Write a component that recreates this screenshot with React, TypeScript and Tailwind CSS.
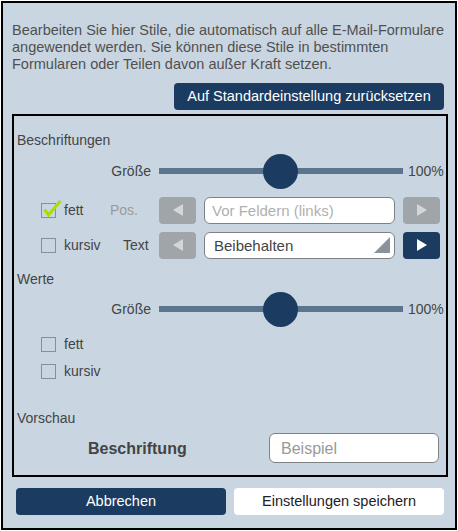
import React from "react";

const navy = "bg-[#1b3b61]";

const Slider: React.FC<{ label: string }> = ({ label }) => (
	<div className="flex items-center h-[36px]">
		<div className="w-[137px] text-right">{label}</div>
		<div className="relative ml-[8px] w-[244px] h-[6px] bg-[#5b7590]">
			<div className="absolute left-[104px] top-[-14.5px] w-[35px] h-[35px] rounded-full bg-[#1b3b61]" />
		</div>
		<div className="ml-[5px]">100%</div>
	</div>
);

const CheckBox: React.FC<{ checked?: boolean }> = ({ checked }) => (
	<div className="relative w-[15px] h-[15px] border border-[#8a8f94]">
		{checked && (
			<svg
				className="absolute left-[1px] top-[-5px]"
				width="20"
				height="18"
				viewBox="0 0 20 18"
			>
				<path
					d="M1.5 10.5 L5.5 16 L17.5 2"
					fill="none"
					stroke="#a8e000"
					strokeWidth="3"
				/>
			</svg>
		)}
	</div>
);

const ArrowButton: React.FC<{ dir: "left" | "right"; active?: boolean }> = ({
	dir,
	active,
}) => (
	<div
		className={
			active
				? "w-[37px] h-[27px] rounded-[4px] bg-[#1b3b61] flex items-center justify-center"
				: "w-[37px] h-[27px] rounded-[4px] bg-[#a0a5a9] flex items-center justify-center"
		}
	>
		<svg width="10" height="12" viewBox="0 0 10 12">
			{dir === "left" ? (
				<polygon points="10,0 10,12 0,6" fill="#d2d6d9" />
			) : (
				<polygon points="0,0 0,12 10,6" fill={active ? "#ffffff" : "#d2d6d9"} />
			)}
		</svg>
	</div>
);

export default function App() {
	return (
		<div
			className="w-[458px] h-[531px] pt-px pl-px text-[14px] leading-[17px] text-[#444]"
			style={{ fontFamily: '"Liberation Sans", Arial, sans-serif' }}
		>
			<div className="w-[456px] h-[529px] border-2 border-black bg-[#c9d6e1] flex flex-col">
				<p className="pt-[19px] pl-[9px] w-[450px] text-[#505050] text-[14.5px]">
					Bearbeiten Sie hier Stile, die automatisch auf alle E-Mail-Formulare
					angewendet werden. Sie können diese Stile in bestimmten Formularen
					oder Teilen davon außer Kraft setzen.
				</p>
				<div className="mt-[10px] flex justify-end pr-[11px]">
					<button
						type="button"
						className={`w-[270px] h-[27px] rounded-[4px] ${navy} text-white text-[14.5px]`}
					>
						Auf Standardeinstellung zurücksetzen
					</button>
				</div>
				<div className="mt-[4px] ml-[9px] w-[436px] h-[363px] border-2 border-black flex flex-col">
					<div className="mt-[15px] h-[18px] pl-[3px] flex items-center">
						Beschriftungen
					</div>
					<div className="mt-[4px]">
						<Slider label="Größe" />
					</div>
					<div className="mt-[7px] h-[28px] flex items-center">
						<div className="w-[91px] pl-[27px] flex items-center">
							<CheckBox checked />
							<span className="ml-[8px]">fett</span>
						</div>
						<div className="w-[54px] pl-[5px] text-[#9a9a9a]">Pos.</div>
						<ArrowButton dir="left" />
						<div className="ml-[8px] w-[191px] h-[27px] rounded-[6px] border border-[#7d8286] bg-white flex items-center pl-[7px] text-[15px] text-[#b0b0b0]">
							Vor Feldern (links)
						</div>
						<div className="ml-[8px]">
							<ArrowButton dir="right" />
						</div>
					</div>
					<div className="mt-[7px] h-[28px] flex items-center">
						<div className="w-[91px] pl-[27px] flex items-center">
							<CheckBox />
							<span className="ml-[8px]">kursiv</span>
						</div>
						<div className="w-[54px] pl-[18px]">Text</div>
						<ArrowButton dir="left" />
						<div className="relative ml-[8px] w-[191px] h-[27px] rounded-[6px] border border-[#7d8286] bg-white flex items-center pl-[9px] text-[15px] text-[#444]">
							Beibehalten
							<svg
								className="absolute right-[4px] bottom-[5px]"
								width="16"
								height="16"
								viewBox="0 0 16 16"
							>
								<polygon points="16,0 16,16 0,16" fill="#8a939b" />
							</svg>
						</div>
						<div className="ml-[8px]">
							<ArrowButton dir="right" active />
						</div>
					</div>
					<div className="mt-[11px] h-[18px] pl-[3px] flex items-center">Werte</div>
					<div className="mt-[3px]">
						<Slider label="Größe" />
					</div>
					<div className="mt-[7px] h-[20px] pl-[27px] flex items-center">
						<CheckBox />
						<span className="ml-[8px]">fett</span>
					</div>
					<div className="mt-[7px] h-[20px] pl-[27px] flex items-center">
						<CheckBox />
						<span className="ml-[8px]">kursiv</span>
					</div>
					<div className="mt-[28px] h-[18px] pl-[3px] flex items-center">
						Vorschau
					</div>
					<div className="mt-[6px] h-[30px] flex items-center">
						<div className="w-[255px] pl-[74px] font-bold text-[16px]">
							Beschriftung
						</div>
						<div className="w-[170px] h-[30px] rounded-[6px] border border-[#7d8286] bg-white flex items-center pl-[11px] text-[16px] text-[#999]">
							Beispiel
						</div>
					</div>
				</div>
				<div className="mt-[11px] ml-[13px] flex gap-[8px]">
					<button
						type="button"
						className={`w-[210px] h-[27px] rounded-[4px] ${navy} text-white text-[14.5px]`}
					>
						Abbrechen
					</button>
					<button
						type="button"
						className="w-[210px] h-[27px] rounded-[4px] bg-white text-[#222] text-[14.5px]"
					>
						Einstellungen speichern
					</button>
				</div>
			</div>
		</div>
	);
}
